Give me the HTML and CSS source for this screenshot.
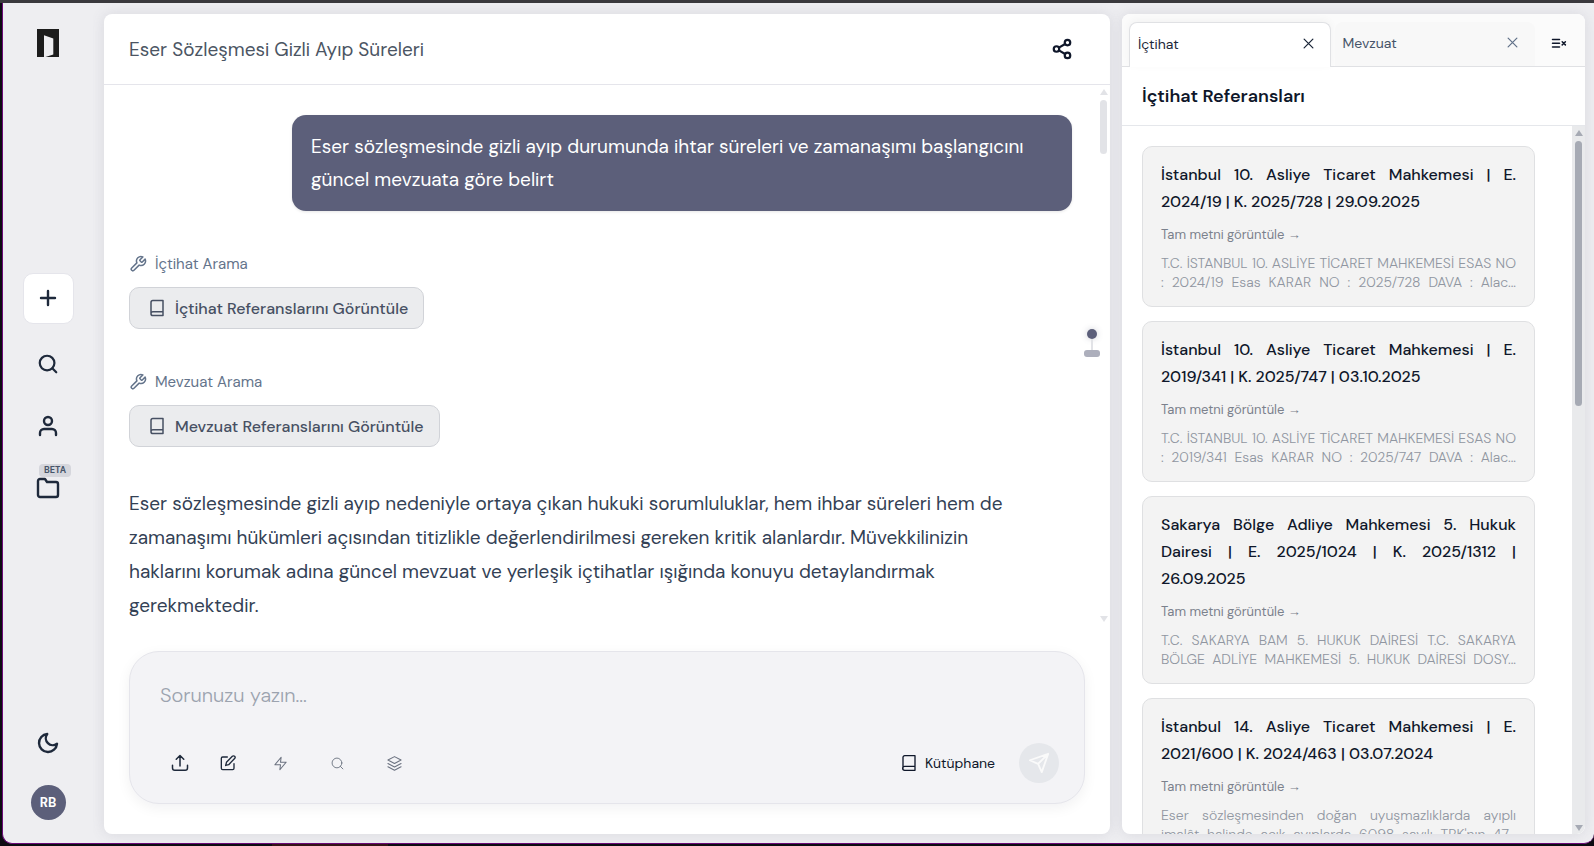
FILE: index.html
```
<!DOCTYPE html>
<html lang="tr">
<head>
  <meta charset="UTF-8" />
  <meta name="viewport" content="width=device-width, initial-scale=1.0"/>
  <title>Eser Sözleşmesi Gizli Ayıp Süreleri</title>
  <link rel="stylesheet" href="styles.css">
</head>
<body>
  <div class="app">

    <!-- Sidebar -->
    <nav class="sidebar">
      <a class="logo" href="#" aria-label="Ana sayfa">
        <svg width="22" height="28" viewBox="0 0 22 28"><path fill="#1c1c1c" fill-rule="evenodd" d="M0 0h22v28H8.500l7.800-2.600V9.500L7 6.200V28H0z"/></svg>
      </a>
      <div class="nav-group">
        <button class="new-chat" aria-label="Yeni sohbet">
          <svg class="icon" width="24" height="24" viewBox="0 0 24 24"><path d="M5 12h14M12 5v14"/></svg>
        </button>
        <button class="nav-btn" aria-label="Ara">
          <svg class="icon" width="22" height="22" viewBox="0 0 24 24"><circle cx="11" cy="11" r="8"/><path d="m21 21-4.300-4.300"/></svg>
        </button>
        <button class="nav-btn" aria-label="Profil">
          <svg class="icon" width="24" height="24" viewBox="0 0 24 24"><path d="M20 21v-2a4 4 0 0 0-4-4H8a4 4 0 0 0-4 4v2"/><circle cx="12" cy="7" r="4"/></svg>
        </button>
        <button class="nav-btn" aria-label="Dosyalar">
          <svg class="icon" width="24" height="24" viewBox="0 0 24 24"><path d="M22 19a2 2 0 0 1-2 2H4a2 2 0 0 1-2-2V5a2 2 0 0 1 2-2h5l2 3h9a2 2 0 0 1 2 2z"/></svg>
          <span class="beta">BETA</span>
        </button>
      </div>
      <div class="nav-bottom">
        <button class="nav-btn" aria-label="Koyu tema">
          <svg class="icon" width="24" height="24" viewBox="0 0 24 24"><path d="M21 12.790A9 9 0 1 1 11.210 3 7 7 0 0 0 21 12.790z"/></svg>
        </button>
        <button class="avatar">RB</button>
      </div>
    </nav>

    <div class="content">
      <!-- Chat -->
      <main class="chat">
        <header class="chat-header">
          <h1>Eser Sözleşmesi Gizli Ayıp Süreleri</h1>
          <button class="share" aria-label="Paylaş">
            <svg class="icon" width="22" height="22" viewBox="0 0 24 24"><circle cx="18" cy="5" r="3"/><circle cx="6" cy="12" r="3"/><circle cx="18" cy="19" r="3"/><path d="m8.590 13.510 6.830 3.980M15.410 6.510l-6.820 3.980"/></svg>
          </button>
        </header>

        <div class="chat-body">
          <div class="messages">
            <p class="bubble">Eser sözleşmesinde gizli ayıp durumunda ihtar süreleri ve zamanaşımı başlangıcını güncel mevzuata göre belirt</p>

            <section class="tool">
              <p class="tool-name">
                <svg class="icon" width="18" height="18" viewBox="0 0 24 24"><path d="M14.700 6.300a1 1 0 0 0 0 1.400l1.600 1.600a1 1 0 0 0 1.400 0l3.770-3.770a6 6 0 0 1-7.940 7.940l-6.910 6.910a2.120 2.120 0 0 1-3-3l6.910-6.910a6 6 0 0 1 7.940-7.940l-3.760 3.760z"/></svg>
                İçtihat Arama
              </p>
              <button class="tool-btn">
                <svg class="icon" width="18" height="18" viewBox="0 0 24 24"><path d="M4 19.500V4.500A2.500 2.500 0 0 1 6.500 2H20v20H6.500a2.500 2.500 0 0 1 0-5H20"/></svg>
                İçtihat Referanslarını Görüntüle
              </button>
            </section>

            <section class="tool">
              <p class="tool-name">
                <svg class="icon" width="18" height="18" viewBox="0 0 24 24"><path d="M14.700 6.300a1 1 0 0 0 0 1.400l1.600 1.600a1 1 0 0 0 1.400 0l3.770-3.770a6 6 0 0 1-7.940 7.940l-6.910 6.910a2.120 2.120 0 0 1-3-3l6.910-6.910a6 6 0 0 1 7.940-7.940l-3.760 3.760z"/></svg>
                Mevzuat Arama
              </p>
              <button class="tool-btn">
                <svg class="icon" width="18" height="18" viewBox="0 0 24 24"><path d="M4 19.500V4.500A2.500 2.500 0 0 1 6.500 2H20v20H6.500a2.500 2.500 0 0 1 0-5H20"/></svg>
                Mevzuat Referanslarını Görüntüle
              </button>
            </section>

            <p class="answer">Eser sözleşmesinde gizli ayıp nedeniyle ortaya çıkan hukuki sorumluluklar, hem ihbar süreleri hem de zamanaşımı hükümleri açısından titizlikle değerlendirilmesi gereken kritik alanlardır. Müvekkilinizin haklarını korumak adına güncel mevzuat ve yerleşik içtihatlar ışığında konuyu detaylandırmak gerekmektedir.</p>
          </div>
          <div class="scrollbar scrollbar-light">
            <span class="arrow-up"></span>
            <span class="thumb"></span>
            <span class="arrow-down"></span>
          </div>
          <div class="minimap"><span class="dot"></span><span class="stem"></span><span class="bar"></span></div>
        </div>

        <form class="composer">
          <textarea rows="1" placeholder="Sorunuzu yazın..." aria-label="Sorunuz"></textarea>
          <div class="composer-tools">
            <button type="button" aria-label="Yükle">
              <svg class="icon" width="18" height="18" viewBox="0 0 24 24"><path d="M2 15v3.500a3 3 0 0 0 3 3h14a3 3 0 0 0 3-3V15M17 7l-5-5-5 5M12 2v14"/></svg>
            </button>
            <button type="button" aria-label="Düzenle">
              <svg class="icon" width="16" height="16" viewBox="0 0 24 24"><path d="M11 3H4a2 2 0 0 0-2 2v15a2 2 0 0 0 2 2h15a2 2 0 0 0 2-2v-7"/><path d="M18.500 1.900a2.300 2.300 0 0 1 3.400 3.400L13 14.500l-4.500 1.200L9.700 11z"/></svg>
            </button>
            <button type="button" class="mode" aria-label="Hızlı">
              <svg class="icon" width="15" height="15" viewBox="0 0 24 24"><path d="M13 2 3 14h9l-1 8 10-12h-9z"/></svg>
            </button>
            <button type="button" class="mode" aria-label="Araştır">
              <svg class="icon" width="13" height="13" viewBox="0 0 24 24"><circle cx="11" cy="11" r="9"/><path d="m22 22-4.600-4.600"/></svg>
            </button>
            <button type="button" class="mode" aria-label="Katmanlar">
              <svg class="icon" width="15" height="15" viewBox="0 0 24 24"><path d="M12 1 1.500 6.500 12 12l10.500-5.500zM1.500 12 12 17.500 22.500 12M1.500 17.300 12 22.800l10.500-5.500"/></svg>
            </button>
            <button type="button" class="library">
              <svg class="icon" width="16" height="16" viewBox="0 0 24 24"><path d="M3 20V3.500A2.500 2.500 0 0 1 5.500 1H21v22H5.500a2.500 2.500 0 0 1 0-6H21"/></svg>
              Kütüphane
            </button>
            <button type="submit" class="send" aria-label="Gönder">
              <svg class="icon" width="22" height="22" viewBox="0 0 24 24"><path d="m22 2-7 20-4-9-9-4zM22 2 11 13"/></svg>
            </button>
          </div>
        </form>
      </main>

      <!-- References -->
      <aside class="refs">
        <div class="tabs">
          <div class="tab active">
            <button class="tab-label">İçtihat</button>
            <button class="tab-close" aria-label="Kapat"><svg class="icon" width="15" height="15" viewBox="0 0 24 24"><path d="M19 5 5 19M5 5l14 14"/></svg></button>
          </div>
          <div class="tab">
            <button class="tab-label">Mevzuat</button>
            <button class="tab-close" aria-label="Kapat"><svg class="icon" width="15" height="15" viewBox="0 0 24 24"><path d="M19 5 5 19M5 5l14 14"/></svg></button>
          </div>
          <button class="close-all" aria-label="Tümünü kapat">
            <svg class="icon" width="16" height="16" viewBox="0 0 16 16"><path d="M1.500 4.500h7M1.500 8.300h7M1.500 12h7M11.200 6.700l3.200 3.200M14.400 6.700l-3.200 3.200"/></svg>
          </button>
        </div>
        <h2>İçtihat Referansları</h2>

        <div class="refs-body">
          <div class="ref-list">
            <article class="card">
              <h3>İstanbul 10. Asliye Ticaret Mahkemesi | E. 2024/19 | K. 2025/728 | 29.09.2025</h3>
              <a href="#">Tam metni görüntüle <span class="arrow">→</span></a>
              <p>T.C. İSTANBUL 10. ASLİYE TİCARET MAHKEMESİ ESAS NO : 2024/19 Esas KARAR NO : 2025/728 DAVA : Alac...</p>
            </article>
            <article class="card">
              <h3>İstanbul 10. Asliye Ticaret Mahkemesi | E. 2019/341 | K. 2025/747 | 03.10.2025</h3>
              <a href="#">Tam metni görüntüle <span class="arrow">→</span></a>
              <p>T.C. İSTANBUL 10. ASLİYE TİCARET MAHKEMESİ ESAS NO : 2019/341 Esas KARAR NO : 2025/747 DAVA : Alac...</p>
            </article>
            <article class="card">
              <h3>Sakarya Bölge Adliye Mahkemesi 5. Hukuk Dairesi | E. 2025/1024 | K. 2025/1312 | 26.09.2025</h3>
              <a href="#">Tam metni görüntüle <span class="arrow">→</span></a>
              <p>T.C. SAKARYA BAM 5. HUKUK DAİRESİ T.C. SAKARYA BÖLGE ADLİYE MAHKEMESİ 5. HUKUK DAİRESİ DOSY...</p>
            </article>
            <article class="card">
              <h3>İstanbul 14. Asliye Ticaret Mahkemesi | E. 2021/600 | K. 2024/463 | 03.07.2024</h3>
              <a href="#">Tam metni görüntüle <span class="arrow">→</span></a>
              <p>Eser sözleşmesinden doğan uyuşmazlıklarda ayıplı imalât halinde açık ayıplarda 6098 sayılı TBK'nın 47...</p>
            </article>
          </div>
          <div class="scrollbar scrollbar-dark">
            <span class="arrow-up"></span>
            <span class="thumb"></span>
            <span class="arrow-down"></span>
          </div>
        </div>
      </aside>
    </div>
  </div>
</body>
</html>
```
FILE: styles.css
```
* {
  box-sizing: border-box;
}

body {
  margin: 0;
  height: 100vh;
  padding: 3px 0 2px 2px;
  overflow: hidden;
  background:
    linear-gradient(#3a393d, #3a393d) top / 100% 3px no-repeat,
    linear-gradient(#351217, #351217) 272px 100% / 116px 3px no-repeat,
    #0d0b12;
  font-family: 'DM Sans', Inter, sans-serif;
  font-optical-sizing: none;
  color: #334155;
}

h1, h2, h3, p {
  margin: 0;
}

button {
  display: flex;
  align-items: center;
  justify-content: center;
  padding: 0;
  border: none;
  background: none;
  font-family: inherit;
  color: #1e293b;
  cursor: pointer;
}

.icon {
  flex: none;
  fill: none;
  stroke: currentColor;
  stroke-width: 2;
  stroke-linecap: round;
  stroke-linejoin: round;
}

.app {
  display: flex;
  height: 100%;
  overflow: hidden;
  background: #eeeef1;
  border-left: 1px solid #6b0a78;
  border-bottom: 1px solid #6b0a78;
  border-radius: 0 0 10px 10px;
}

/* Sidebar */
.sidebar {
  display: flex;
  flex-direction: column;
  align-items: center;
  justify-content: space-between;
  width: 90px;
  padding: 26px 0 23px;
}

.logo {
  display: flex;
}

.nav-group {
  display: flex;
  flex-direction: column;
  align-items: center;
  gap: 18px;
  margin-top: 4px;
}

.nav-group .icon,
.nav-bottom .icon,
.share .icon {
  stroke-width: 2.4;
}

.new-chat {
  width: 51px;
  height: 51px;
  background: #fff;
  border: 1px solid #e5e5eb;
  border-radius: 10px;
}

.nav-btn {
  position: relative;
  width: 44px;
  height: 44px;
}

.beta {
  position: absolute;
  top: -2px;
  left: 13px;
  padding: 0 5px;
  border-radius: 4px;
  background: #d5d6dc;
  font-size: 9px;
  line-height: 13px;
  font-weight: 700;
  color: #475569;
}

.nav-bottom {
  display: flex;
  flex-direction: column;
  align-items: center;
  gap: 20px;
}

.avatar {
  width: 35px;
  height: 35px;
  border-radius: 50%;
  background: #5c5f7a;
  color: #fff;
  font-size: 13px;
  font-weight: 700;
}

.content {
  display: flex;
  flex: 1;
  gap: 12px;
  min-width: 0;
  padding: 11px 9px 9px 11px;
  overflow: hidden;
}

.chat, .refs {
  display: flex;
  flex-direction: column;
  background: #fff;
  border-radius: 8px;
  box-shadow: 0 0 14px rgba(92, 95, 122, 0.15);
}

/* Chat */
.chat {
  flex: 1;
  min-width: 0;
}

.chat-header {
  display: flex;
  align-items: center;
  justify-content: space-between;
  height: 71px;
  padding: 0 37px 0 25px;
  border-bottom: 1px solid #e5e5eb;
}

.chat-header h1 {
  font-size: 19px;
  font-weight: 400;
  color: #4b5563;
}

.share {
  color: #0f172a;
}

.chat-body {
  position: relative;
  display: flex;
  flex: 1;
  min-height: 0;
}

.messages {
  flex: 1;
  padding: 30px 25px 0;
  overflow: hidden;
}

.bubble {
  margin-left: 163px;
  padding: 15px 19px;
  border-radius: 14px;
  background: #5c5f7a;
  color: #fff;
  font-size: 19px;
  line-height: 33px;
  box-shadow: 0 1px 3px rgba(0, 0, 0, 0.1);
}

.tool {
  margin-top: 41px;
}

.tool-name {
  display: flex;
  align-items: center;
  gap: 8px;
  margin-bottom: 11px;
  font-size: 15px;
  line-height: 24px;
  color: #64748b;
}

.tool-btn {
  gap: 9px;
  height: 42px;
  padding: 0 15px 0 18px;
  border: 1px solid #d1d3d8;
  border-radius: 10px;
  background: #ebecee;
  font-size: 16px;
  font-weight: 500;
  color: #475063;
}

.answer {
  max-width: 880px;
  margin-top: 40px;
  font-size: 19px;
  line-height: 34px;
}

.scrollbar {
  display: flex;
  flex-direction: column;
  align-items: center;
  padding: 4px 0 3px;
}

.scrollbar-light {
  width: 13px;
  color: #e2e3e7;
}

.scrollbar-dark {
  width: 13px;
  background: #e9eaec;
  border-bottom-right-radius: 8px;
  color: #a6aab4;
}

.arrow-up, .arrow-down {
  border: 4px solid transparent;
}

.arrow-up {
  border-top: none;
  border-bottom: 6px solid currentColor;
}

.arrow-down {
  margin-top: auto;
  border-bottom: none;
  border-top: 6px solid currentColor;
}

.thumb {
  width: 7px;
  height: 54px;
  margin-top: 5px;
  border-radius: 4px;
  background: currentColor;
}

.scrollbar-dark .thumb {
  height: 265px;
}

.minimap {
  position: absolute;
  top: 244px;
  right: 10px;
  display: flex;
  flex-direction: column;
  align-items: center;
}

.minimap .dot {
  width: 10px;
  height: 10px;
  border-radius: 50%;
  background: #5c5f7a;
  box-shadow: 0 0 6px rgba(92, 95, 122, 0.3);
}

.minimap .stem {
  width: 2px;
  height: 11px;
  background: #e2e3e7;
}

.minimap .bar {
  width: 16px;
  height: 7px;
  border-radius: 3px;
  background: #adafbc;
}

/* Composer */
.composer {
  display: flex;
  flex-direction: column;
  justify-content: space-between;
  height: 153px;
  margin: 26px 25px 30px;
  padding: 25px 25px 20px 30px;
  border: 1px solid #e5e5eb;
  border-radius: 30px;
  background: #f3f3f6;
  box-shadow: 0 4px 14px rgba(15, 23, 42, 0.06);
}

.composer textarea {
  width: 100%;
  padding: 0;
  border: none;
  outline: none;
  resize: none;
  overflow: hidden;
  background: none;
  font-family: inherit;
  font-size: 20px;
  font-weight: 300;
  line-height: 36px;
  color: #334155;
}

.composer textarea::placeholder {
  color: #9ca3af;
}

.composer-tools {
  display: flex;
  align-items: center;
  gap: 8px;
}

.composer-tools button {
  width: 40px;
  height: 40px;
}

.composer-tools .mode {
  width: 49px;
  color: #6b7280;
}

.mode .icon {
  stroke-width: 1.7;
}

.composer-tools .library {
  gap: 8px;
  width: auto;
  margin: 0 16px 0 auto;
  font-size: 14px;
  font-weight: 400;
  color: #0f172a;
}

.composer-tools .send {
  border-radius: 50%;
  background: #e5e7eb;
  color: #fafafa;
}

/* References */
.refs {
  width: 463px;
  overflow: hidden;
}

.tabs {
  display: flex;
  gap: 4px;
  height: 53px;
  padding: 8px 6px 0 7px;
  border-bottom: 1px solid #e0e1e4;
  background: #fbfbfb;
}

.tab {
  display: flex;
  flex: 1;
  align-items: center;
  justify-content: space-between;
  padding: 0 15px 3px 8px;
  border-radius: 8px 8px 0 0;
  background: #f8f8f8;
}

.tab.active {
  margin-bottom: -1px;
  padding-right: 14px;
  border: 1px solid #e0e1e4;
  border-bottom: none;
  background: #fff;
  box-shadow: 0 -2px 8px rgba(0, 0, 0, 0.04);
}

.tab-label {
  font-size: 14px;
  color: #475569;
}

.tab-close {
  color: #64748b;
}

.active .tab-label,
.active .tab-close {
  color: #1e293b;
}

.close-all {
  width: 40px;
  padding-bottom: 2px;
  color: #0f172a;
}

.close-all .icon {
  stroke-width: 1.5;
}

.refs h2 {
  padding: 0 20px;
  border-bottom: 1px solid #e5e7eb;
  font-size: 18px;
  font-weight: 600;
  line-height: 58px;
  color: #0f172a;
}

.refs-body {
  display: flex;
  flex: 1;
  min-height: 0;
}

.ref-list {
  display: flex;
  flex: 1;
  flex-direction: column;
  gap: 14px;
  padding: 20px 37px 0 20px;
  overflow: hidden;
}

.card {
  flex: none;
  padding: 14px 18px;
  border: 1px solid #dfe0e2;
  border-radius: 10px;
  background: #f3f3f3;
  text-align: justify;
}

.card h3 {
  font-size: 16px;
  font-weight: 500;
  line-height: 27px;
  color: #0f172a;
}

.card a {
  display: block;
  margin: 9px 0 8px;
  font-size: 13px;
  line-height: 22px;
  color: #7b818c;
  text-decoration: none;
}

.card .arrow {
  font-family: 'Liberation Sans', sans-serif;
}

.card p {
  font-size: 14px;
  font-weight: 300;
  line-height: 19px;
  color: #9096a1;
  text-align-last: justify;
}
```
